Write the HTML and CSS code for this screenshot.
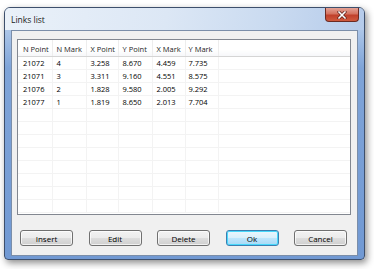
FILE: index.html
```html
<!DOCTYPE html>
<html lang="en">
<head>
    <meta charset="UTF-8">
    <title>Links list</title>
    <link rel="stylesheet" href="styles.css">
</head>
<body>

    <!-- Dialog window -->
    <div class="window">
        <div class="titlebar">
            <span class="title">Links list</span>
            <button class="close-btn" title="Close">
                <svg width="10" height="8" viewBox="0 0 10 8">
                    <path d="M2 1 L8 7 M8 1 L2 7" stroke="#5a1d18" stroke-width="3" stroke-linecap="square"/>
                    <path d="M2 1 L8 7 M8 1 L2 7" stroke="#ffffff" stroke-width="1.6" stroke-linecap="square"/>
                </svg>
            </button>
        </div>

        <div class="client">
            <!-- List view -->
            <div class="listview">
                <table class="grid">
                    <thead>
                        <tr>
                            <th>N Point</th>
                            <th>N Mark</th>
                            <th>X Point</th>
                            <th>Y Point</th>
                            <th>X Mark</th>
                            <th>Y Mark</th>
                            <th class="filler"></th>
                        </tr>
                    </thead>
                    <tbody>
                        <tr><td>21072</td><td>4</td><td>3.258</td><td>8.670</td><td>4.459</td><td>7.735</td><td></td></tr>
                        <tr><td>21071</td><td>3</td><td>3.311</td><td>9.160</td><td>4.551</td><td>8.575</td><td></td></tr>
                        <tr><td>21076</td><td>2</td><td>1.828</td><td>9.580</td><td>2.005</td><td>9.292</td><td></td></tr>
                        <tr><td>21077</td><td>1</td><td>1.819</td><td>8.650</td><td>2.013</td><td>7.704</td><td></td></tr>
                        <tr><td></td><td></td><td></td><td></td><td></td><td></td><td></td></tr>
                        <tr><td></td><td></td><td></td><td></td><td></td><td></td><td></td></tr>
                        <tr><td></td><td></td><td></td><td></td><td></td><td></td><td></td></tr>
                        <tr><td></td><td></td><td></td><td></td><td></td><td></td><td></td></tr>
                        <tr><td></td><td></td><td></td><td></td><td></td><td></td><td></td></tr>
                        <tr><td></td><td></td><td></td><td></td><td></td><td></td><td></td></tr>
                        <tr><td></td><td></td><td></td><td></td><td></td><td></td><td></td></tr>
                        <tr><td></td><td></td><td></td><td></td><td></td><td></td><td></td></tr>
                    </tbody>
                </table>
            </div>

            <!-- Buttons -->
            <div class="buttons">
                <button class="button">Insert</button>
                <button class="button">Edit</button>
                <button class="button">Delete</button>
                <button class="button default">Ok</button>
                <button class="button">Cancel</button>
            </div>
        </div>
    </div>

</body>
</html>
```

FILE: styles.css
```css
body, html {
    margin: 0;
    padding: 0;
    width: 100%;
    height: 100%;
    background: #ffffff;
    font-family: "Open Sans", "DejaVu Sans", sans-serif;
}

body {
    padding: 7px 0 0 4px;
    box-sizing: border-box;
}

/* Aero style window frame */
.window {
    width: 361px;
    height: 253px;
    box-sizing: border-box;
    border: 1px solid #3d4f6c;
    border-radius: 6px 6px 4px 4px;
    background: linear-gradient(to bottom, #c9daf0 0, #a3bfe5 30px, #7fa4d8 60px, #7199d3 100%);
    box-shadow: 2px 3px 7px rgba(0, 0, 0, 0.45);
    padding: 0 6px 3px 6px;
    display: flex;
    flex-direction: column;
}

.titlebar {
    height: 22px;
    margin: 0 -6px;
    padding-left: 6px;
    display: flex;
    align-items: flex-start;
    border-radius: 5px 5px 0 0;
    background: linear-gradient(100deg, #eaf1f9 0%, #dce7f5 45%, #c9daf0 75%, #b5cbea 100%);
}

.title {
    font-size: 8.5px;
    color: #1b1b1b;
    line-height: 22px;
    padding-top: 1px;
}

.close-btn {
    margin-left: auto;
    margin-right: 5px;
    width: 34px;
    height: 14px;
    padding: 0;
    border: 1px solid #6b2a22;
    border-top: none;
    border-radius: 0 0 4px 4px;
    background: linear-gradient(to bottom, #e4a295 0, #d4725f 45%, #c0402b 55%, #cf5a3e 100%);
    display: flex;
    align-items: center;
    justify-content: center;
}

/* Dialog client area */
.client {
    flex: 1;
    border: 1px solid #7b8ea9;
    background: #f0f0f0;
    padding: 8px 6px 0 5px;
    display: flex;
    flex-direction: column;
}

.listview {
    height: 176px;
    box-sizing: border-box;
    border: 1px solid #828790;
    background: #ffffff;
    overflow: hidden;
}

.grid {
    border-collapse: collapse;
    width: 100%;
    table-layout: fixed;
    font-size: 7.5px;
    color: #000000;
}

.grid th {
    height: 16px;
    box-sizing: border-box;
    padding: 2px 0 0 4px;
    text-align: left;
    font-weight: normal;
    color: #1e1e1e;
    background: linear-gradient(to bottom, #ffffff 0, #ffffff 60%, #f6f7f9 100%);
    border-right: 1px solid #ededed;
    border-bottom: 1px solid #d5d5d5;
}

.grid th:nth-child(1) { width: 34px; padding-left: 5px; }
.grid th:nth-child(2) { width: 34px; }
.grid th:nth-child(3) { width: 32px; }
.grid th:nth-child(4) { width: 34px; }
.grid th:nth-child(5) { width: 33px; }
.grid th:nth-child(6) { width: 33px; padding-left: 3px; }

.grid th.filler {
    border-right: none;
}

.grid td {
    height: 13px;
    box-sizing: border-box;
    padding: 1px 0 0 4px;
    border-right: 1px solid #f3f3f3;
    border-bottom: 1px solid #f3f3f3;
    white-space: nowrap;
}

.grid td:first-child { padding-left: 5px; }
.grid td:nth-child(6) { padding-left: 3px; }
.grid td:last-child { border-right: none; }

/* Push buttons */
.buttons {
    display: flex;
    gap: 15.5px;
    padding-left: 3px;
    margin-top: 15px;
}

.button {
    width: 53px;
    height: 16px;
    padding: 0;
    font-family: "Open Sans", "DejaVu Sans", sans-serif;
    font-size: 8px;
    color: #000000;
    border: 1px solid #707070;
    border-radius: 3px;
    background: linear-gradient(to bottom, #f2f2f2 0, #ebebeb 50%, #dddddd 51%, #cfcfcf 100%);
    box-shadow: inset 0 0 0 1px rgba(255, 255, 255, 0.7);
}

.button.default {
    border-color: #3c7fb1;
    background: linear-gradient(to bottom, #eaf6fd 0, #d9f0fc 50%, #bee6fd 51%, #a7d9f5 100%);
    box-shadow: inset 0 0 0 1px #48d8fb;
}
```
